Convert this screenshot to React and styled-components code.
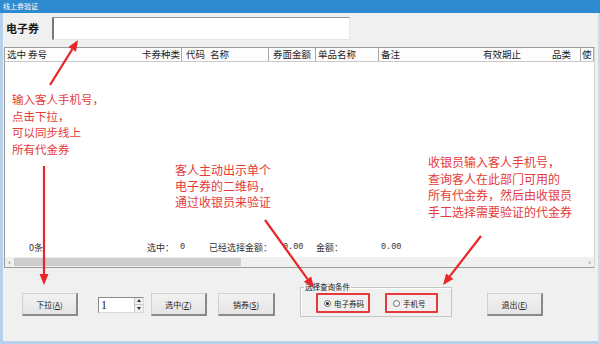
import React from "react";
import styled, { createGlobalStyle } from "styled-components";

const Global = createGlobalStyle`
  html, body { margin: 0; padding: 0; background: #f0f0f0; }
  #root { width: 600px; height: 344px; overflow: hidden; }
  * { box-sizing: border-box; }
`;

const FONT = `"Noto Sans CJK SC", "Noto Sans", "Liberation Sans", sans-serif`;
const RED = "#e63a3a";

const Window = styled.div`
  position: relative;
  width: 600px;
  height: 344px;
  display: flex;
  flex-direction: column;
  background: #f0f0f0;
  border-left: 3px solid #b6d2ea;
  border-right: 2px solid #c9dced;
  border-bottom: 3px solid #b6d2ea;
  font-family: ${FONT};
  color: #1a1a1a;
`;

const TitleBar = styled.div`
  height: 13px;
  margin-left: -3px;
  margin-right: -2px;
  background: #2e8bd0;
  color: #ffffff;
  font-size: 7px;
  line-height: 13px;
  padding-left: 3px;
  flex: none;
`;

const TopRow = styled.div`
  height: 34px;
  display: flex;
  align-items: flex-start;
  padding-top: 4px;
  flex: none;
`;

const FieldLabel = styled.div`
  width: 49px;
  padding-left: 3px;
  font-size: 11px;
  font-weight: bold;
  line-height: 22px;
`;

const TextInput = styled.div`
  width: 298px;
  height: 23px;
  background: #ffffff;
  border-top: 1px solid #9a9a9a;
  border-left: 2px solid #7a7a7a;
  border-right: 1px solid #e6e6e6;
  border-bottom: 1px solid #e6e6e6;
`;

const Grid = styled.div`
  height: 221px;
  margin-left: 1px;
  margin-right: 3px;
  display: flex;
  flex-direction: column;
  background: #ffffff;
  border: 1px solid #9c9c9c;
  border-right-color: #d8d8d8;
  flex: none;
`;

const HeaderRow = styled.div`
  height: 14px;
  display: flex;
  border-bottom: 1px solid #c9c9c9;
  background: #fdfdfd;
  flex: none;
`;

const HeadCell = styled.div`
  width: ${(p) => p.$w}px;
  flex: none;
  font-size: 9.5px;
  line-height: 13px;
  white-space: nowrap;
  overflow: hidden;
  text-align: ${(p) => p.$align || "left"};
  padding: ${(p) => (p.$align === "right" ? `0 ${p.$pad ?? 2}px 0 0` : `0 0 0 ${p.$pad ?? 2}px`)};
  border-right: ${(p) => (p.$div ? "1px solid #a8a8a8" : "none")};
`;

const GridBody = styled.div`
  flex: 1;
  display: flex;
  flex-direction: column;
  justify-content: flex-end;
`;

const SummaryRow = styled.div`
  display: flex;
  height: 13px;
  margin-bottom: 3px;
  padding-left: 24px;
  font-size: 9px;
  line-height: 13px;
  color: #333;
`;

const SumCell = styled.div`
  width: ${(p) => (p.$w ? `${p.$w}px` : "auto")};
  flex: none;
  white-space: nowrap;
  font-family: ${(p) => (p.$num ? `"Liberation Mono", monospace` : FONT)};
  font-size: ${(p) => (p.$num ? "8.5px" : "9px")};
`;

const HScroll = styled.div`
  height: 10px;
  display: flex;
  align-items: center;
  background: #f0f0f0;
  flex: none;
`;

const ScrollArrow = styled.div`
  width: 9px;
  font-size: 8px;
  line-height: 10px;
  text-align: center;
  color: #555;
  flex: none;
`;

const ScrollTrack = styled.div`
  flex: 1;
  height: 10px;
  display: flex;
  align-items: center;
`;

const ScrollThumb = styled.div`
  width: 227px;
  height: 8px;
  background: #cdcdcd;
`;

const BottomBar = styled.div`
  flex: 1;
  display: flex;
  align-items: center;
`;

const Button = styled.div`
  width: ${(p) => p.$w || 56}px;
  height: 23px;
  margin-left: ${(p) => p.$ml || 0}px;
  flex: none;
  display: flex;
  align-items: center;
  justify-content: center;
  background: linear-gradient(#f2f2f2, #e4e4e4);
  border-top: 1px solid #d0d0d0;
  border-left: 1px solid #d0d0d0;
  border-right: 2px solid #8a8a8a;
  border-bottom: 2px solid #8a8a8a;
  font-size: 8px;
  color: #222;
  white-space: nowrap;
  span { text-decoration: underline; }
`;

const Spinner = styled.div`
  width: 46px;
  height: 16px;
  margin-left: ${(p) => p.$ml}px;
  flex: none;
  display: flex;
  background: #fff;
  border-top: 1px solid #8a8a8a;
  border-left: 1px solid #8a8a8a;
  border-right: 1px solid #d8d8d8;
  border-bottom: 1px solid #d8d8d8;
`;

const SpinValue = styled.div`
  flex: 1;
  font-family: "Liberation Serif", serif;
  font-size: 12px;
  line-height: 14px;
  padding-left: 2px;
`;

const SpinArrows = styled.div`
  width: 9px;
  display: flex;
  flex-direction: column;
  border-left: 1px solid #c8c8c8;
  background: #f0f0f0;
`;

const SpinBtn = styled.div`
  flex: 1;
  display: flex;
  align-items: center;
  justify-content: center;
  &::after {
    content: "";
    border-left: 2.5px solid transparent;
    border-right: 2.5px solid transparent;
    ${(p) => (p.$down ? "border-top: 3px solid #333;" : "border-bottom: 3px solid #333;")}
  }
  & + & { border-top: 1px solid #c8c8c8; }
`;

const GroupBox = styled.div`
  position: relative;
  width: 152px;
  height: 30px;
  margin-left: ${(p) => p.$ml}px;
  margin-top: -5px;
  flex: none;
  display: flex;
  align-items: center;
  padding-left: 15px;
  gap: 15px;
  border: 1px solid #c4c4c4;
  box-shadow: inset 1px 1px 0 #ffffff;
`;

const GroupLegend = styled.div`
  position: absolute;
  top: -7px;
  left: 3px;
  padding: 0 1px;
  background: #f0f0f0;
  font-size: 7.5px;
  line-height: 12px;
  color: #222;
  white-space: nowrap;
`;

const Highlight = styled.div`
  width: ${(p) => p.$w}px;
  height: 20px;
  display: flex;
  align-items: center;
  padding-left: 6px;
  gap: 3px;
  border: 2px solid ${RED};
  border-radius: 1px;
  margin-top: 2px;
  flex: none;
`;

const Radio = styled.div`
  width: 7px;
  height: 7px;
  flex: none;
  border-radius: 50%;
  border: 1px solid #666;
  background: #fff;
  display: flex;
  align-items: center;
  justify-content: center;
  &::after {
    content: "";
    width: 3px;
    height: 3px;
    border-radius: 50%;
    background: ${(p) => (p.$on ? "#222" : "transparent")};
  }
`;

const RadioText = styled.div`
  font-size: 7.5px;
  color: #222;
  white-space: nowrap;
`;

const Note = styled.div`
  position: absolute;
  left: ${(p) => p.$x}px;
  top: ${(p) => p.$y}px;
  color: ${RED};
  font-size: ${(p) => p.$fs || 12}px;
  line-height: ${(p) => p.$lh || 16.5}px;
  white-space: nowrap;
`;

const Overlay = styled.svg`
  position: absolute;
  left: -3px;
  top: 0;
  width: 600px;
  height: 344px;
  pointer-events: none;
`;

function Arrow({ x1, y1, x2, y2 }) {
  const dx = x2 - x1;
  const dy = y2 - y1;
  const len = Math.hypot(dx, dy);
  const ux = dx / len;
  const uy = dy / len;
  const hl = 11;
  const hw = 4.5;
  const bx = x2 - ux * hl;
  const by = y2 - uy * hl;
  const pts = `${x2},${y2} ${bx - uy * hw},${by + ux * hw} ${bx + uy * hw},${by - ux * hw}`;
  return (
    <g>
      <line x1={x1} y1={y1} x2={bx} y2={by} stroke="#e8262a" strokeWidth="2.2" />
      <polygon points={pts} fill="#e8262a" />
    </g>
  );
}

const columns = [
  { t: "选中", w: 22, pad: 2 },
  { t: "券号", w: 112, pad: 1 },
  { t: "卡券种类", w: 43, align: "right", pad: 1, div: true },
  { t: "代码", w: 24, pad: 4 },
  { t: "名称", w: 63, pad: 4, div: true },
  { t: "券面金额", w: 47, pad: 4, div: true },
  { t: "单品名称", w: 63, pad: 2, div: true },
  { t: "备注", w: 100, pad: 2 },
  { t: "有效期止", w: 62, pad: 4 },
  { t: "品类", w: 40, align: "right", pad: 9, div: true },
  { t: "使", w: 13, pad: 1, div: true },
];

export default function App() {
  return (
    <>
      <Global />
      <Window>
        <TitleBar>线上券验证</TitleBar>
        <TopRow>
          <FieldLabel>电子券</FieldLabel>
          <TextInput />
        </TopRow>
        <Grid>
          <HeaderRow>
            {columns.map((c) => (
              <HeadCell key={c.t} $w={c.w} $align={c.align} $pad={c.pad} $div={c.div}>
                {c.t}
              </HeadCell>
            ))}
          </HeaderRow>
          <GridBody>
            <SummaryRow>
              <SumCell $w={118}>0条</SumCell>
              <SumCell $w={33}>选中：</SumCell>
              <SumCell $w={29} $num>0</SumCell>
              <SumCell $w={74}>已经选择金额：</SumCell>
              <SumCell $w={33} $num>0.00</SumCell>
              <SumCell $w={65}>金额：</SumCell>
              <SumCell $num>0.00</SumCell>
            </SummaryRow>
          </GridBody>
          <HScroll>
            <ScrollArrow>‹</ScrollArrow>
            <ScrollTrack>
              <ScrollThumb />
            </ScrollTrack>
            <ScrollArrow>›</ScrollArrow>
          </HScroll>
        </Grid>
        <BottomBar>
          <Button $ml={19}>
            下拉(<span>A</span>)
          </Button>
          <Spinner $ml={20}>
            <SpinValue>1</SpinValue>
            <SpinArrows>
              <SpinBtn />
              <SpinBtn $down />
            </SpinArrows>
          </Spinner>
          <Button $ml={7}>
            选中(<span>Z</span>)
          </Button>
          <Button $ml={11} $w={57}>
            销券(<span>S</span>)
          </Button>
          <GroupBox $ml={25}>
            <GroupLegend>选择查询条件</GroupLegend>
            <Highlight $w={54}>
              <Radio $on />
              <RadioText>电子券码</RadioText>
            </Highlight>
            <Highlight $w={53}>
              <Radio />
              <RadioText>手机号</RadioText>
            </Highlight>
          </GroupBox>
          <Button $ml={35}>
            退出(<span>E</span>)
          </Button>
        </BottomBar>

        <Note $x={9} $y={91} $fs={11.5} $lh={16.5}>
          输入客人手机号，
          <br />
          点击下拉，
          <br />
          可以同步线上
          <br />
          所有代金券
        </Note>
        <Note $x={172} $y={162} $fs={12} $lh={16}>
          客人主动出示单个
          <br />
          电子券的二维码，
          <br />
          通过收银员来验证
        </Note>
        <Note $x={425} $y={154} $fs={12} $lh={16.5}>
          收银员输入客人手机号，
          <br />
          查询客人在此部门可用的
          <br />
          所有代金券，然后由收银员
          <br />
          手工选择需要验证的代金券
        </Note>

        <Overlay viewBox="0 0 600 344">
          <Arrow x1={50} y1={85} x2={78} y2={40} />
          <Arrow x1={44} y1={166} x2={44} y2={285} />
          <Arrow x1={265} y1={220} x2={314} y2={288} />
          <Arrow x1={481} y1={236} x2={443} y2={285} />
        </Overlay>
      </Window>
    </>
  );
}
